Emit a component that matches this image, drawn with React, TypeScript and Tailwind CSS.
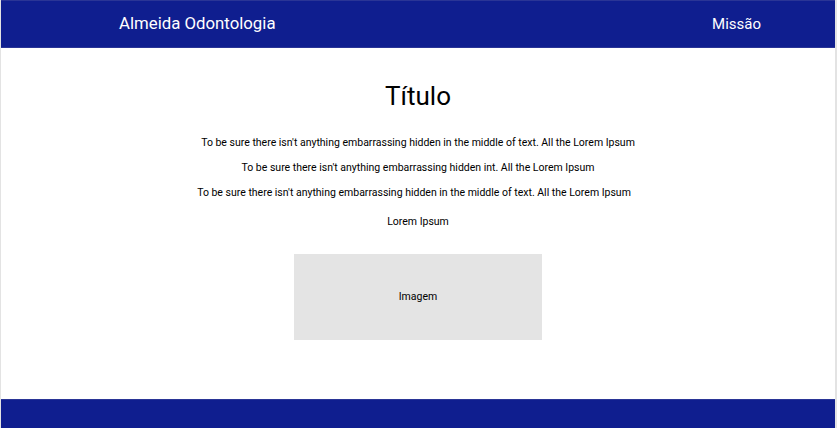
export default function App() {
  return (
    <div
      className="flex h-[428px] w-[837px] flex-col border-l border-r-2 border-[#e3e3e3] bg-white text-black"
      style={{ fontFamily: "Roboto, 'Liberation Sans', sans-serif" }}
    >
      <header className="flex h-12 items-center justify-between border-y border-[#2a3596] bg-[#0f1e8f] pl-[118px] pr-[74px] text-white">
        <span className="text-[16.8px]">Almeida Odontologia</span>
        <span className="text-[15px]">Missão</span>
      </header>

      <main className="flex flex-1 flex-col items-center">
        <h1 className="mt-[33px] text-[26px] leading-[30px]">Título</h1>
        <p className="mt-[24px] text-[10.5px] leading-[16px]">
          To be sure there isn't anything embarrassing hidden in the middle of text. All the Lorem Ipsum
        </p>
        <p className="mt-[9px] text-[10.5px] leading-[16px]">
          To be sure there isn't anything embarrassing hidden int. All the Lorem Ipsum
        </p>
        <p className="mt-[9px] pr-[8px] text-[10.5px] leading-[16px]">
          To be sure there isn't anything embarrassing hidden in the middle of text. All the Lorem Ipsum
        </p>
        <p className="mt-[13px] text-[10.5px] leading-[16px]">Lorem Ipsum</p>
        <div className="mt-[24px] flex h-[86px] w-[248px] items-center justify-center bg-[#e4e4e4] text-[10.5px]">
          Imagem
        </div>
      </main>

      <footer className="h-[29px] border-t border-[#2a3596] bg-[#0f1e8f]" />
    </div>
  );
}
